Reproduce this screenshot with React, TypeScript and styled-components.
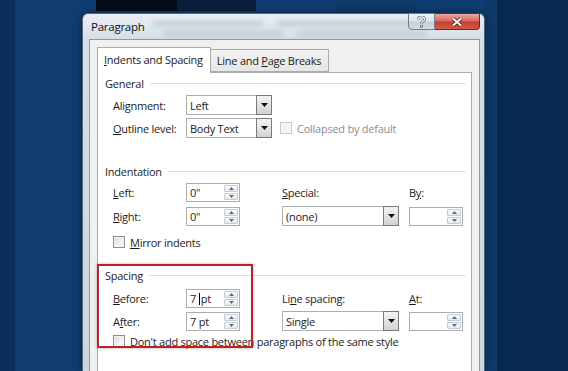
import * as React from 'react';
import styled, { createGlobalStyle } from 'styled-components';

const GlobalStyle = createGlobalStyle`
	html, body {
		margin: 0;
		padding: 0;
	}
	body {
		background: #0f3d72;
		font-family: 'Open Sans', 'Noto Sans', sans-serif;
		letter-spacing: -0.25px;
		-webkit-font-smoothing: antialiased;
	}
`;

const Desktop = styled.div`
	width: 568px;
	height: 371px;
	overflow: hidden;
	display: flex;
	flex-direction: column;
	background: linear-gradient(
		90deg,
		#0b2f5d 0,
		#0b2f5d 15px,
		#0f3d72 15px,
		#0f3d72 485px,
		#0e3a6b 485px,
		#0e3a6b 497px,
		#07294f 497px
	);
`;

const TileStrip = styled.div`
	display: flex;
	height: 13px;
	flex-shrink: 0;
`;

const Tile = styled.div<{ $w: number; $c: string }>`
	width: ${p => p.$w}px;
	height: 11px;
	background: ${p => p.$c};
`;

const Window = styled.div`
	margin-left: 82px;
	width: 403px;
	flex: 1;
	box-sizing: border-box;
	display: flex;
	flex-direction: column;
	border: 1px solid #56667a;
	border-bottom: none;
	border-radius: 6px 6px 0 0;
	background: linear-gradient(180deg, #e9eef3 0, #d6dfe8 24px, #cbd6e1 100%);
	box-shadow: 0 0 8px rgba(0, 0, 0, 0.45);
`;

const TitleBar = styled.div`
	position: relative;
	display: flex;
	align-items: flex-start;
	height: 25px;
	flex-shrink: 0;

	/* the blurred document behind the glass */
	&::before {
		content: '';
		position: absolute;
		left: 66px;
		top: 4px;
		width: 290px;
		height: 22px;
		background:
			linear-gradient(rgba(80, 95, 115, 0.2), rgba(80, 95, 115, 0.2)) 4px 3px / 110px 5px no-repeat,
			linear-gradient(rgba(80, 95, 115, 0.2), rgba(80, 95, 115, 0.2)) 128px 3px / 140px 5px no-repeat,
			linear-gradient(rgba(80, 95, 115, 0.16), rgba(80, 95, 115, 0.16)) 14px 13px / 120px 5px no-repeat,
			linear-gradient(rgba(80, 95, 115, 0.16), rgba(80, 95, 115, 0.16)) 148px 13px / 130px 5px no-repeat;
		filter: blur(2.5px);
	}
`;

const Title = styled.div`
	position: relative;
	flex: 1;
	padding-left: 8px;
	line-height: 25px;
	font-size: 11.5px;
	color: #111;
`;

const CaptionGroup = styled.div`
	position: relative;
	display: flex;
	margin-top: -1px;
	margin-right: 4px;
`;

const CaptionButton = styled.div<{ $close?: boolean }>`
	box-sizing: border-box;
	width: ${p => (p.$close ? 45 : 27)}px;
	height: 17px;
	display: flex;
	align-items: center;
	justify-content: center;
	border: 1px solid ${p => (p.$close ? '#6d2a24' : '#6f7e8e')};
	border-left: ${p => (p.$close ? 'none' : undefined)};
	border-radius: ${p => (p.$close ? '0 0 4px 0' : '0 0 0 4px')};
	background: ${p =>
		p.$close
			? 'linear-gradient(180deg, #eaa79d 0, #d8695c 45%, #c33f30 55%, #d25a48 100%)'
			: 'linear-gradient(180deg, #f1f4f7 0, #dbe2e9 45%, #c6d0da 55%, #d4dce4 100%)'};
`;

const Client = styled.div`
	flex: 1;
	display: flex;
	flex-direction: column;
	margin: 0 4px 0 6px;
	padding: 7px 7px 0 7px;
	border: 1px solid #8d99a7;
	border-bottom: none;
	background: #f0f0f0;
`;

const TabRow = styled.div`
	display: flex;
	align-items: flex-end;
	height: 26px;
	margin-bottom: -1px;
	position: relative;
	z-index: 1;
`;

const Tab = styled.div<{ $active?: boolean }>`
	box-sizing: border-box;
	height: ${p => (p.$active ? 26 : 23)}px;
	margin-bottom: ${p => (p.$active ? 0 : 1)}px;
	padding: ${p => (p.$active ? '0 7px 3px 6px' : '0 7px 1px 6px')};
	display: flex;
	align-items: center;
	border: 1px solid #acacac;
	border-bottom: ${p => (p.$active ? 'none' : '1px solid #acacac')};
	border-left: ${p => (p.$active ? '1px solid #acacac' : 'none')};
	background: ${p => (p.$active ? '#ffffff' : 'linear-gradient(180deg, #f3f3f3, #e6e6e6)')};
	font-size: 11px;
	color: #1b1b1b;
	white-space: nowrap;
`;

const Panel = styled.div`
	flex: 1;
	background: #ffffff;
	border: 1px solid #acacac;
	border-bottom: none;
	padding: 0 5px 0 7px;
`;

const GroupHeader = styled.div<{ $mt: number }>`
	display: flex;
	align-items: center;
	gap: 6px;
	height: 16px;
	margin-top: ${p => p.$mt}px;
	font-size: 11px;
	color: #1e1e1e;
`;

const Rule = styled.div`
	flex: 1;
	height: 1px;
	background: #dde1e6;
`;

const Section = styled.div`
	position: relative;
`;

const FieldRow = styled.div<{ $mt: number; $h?: number }>`
	display: grid;
	grid-template-columns: 73px 54px 42px 117px 10px 54px;
	align-items: center;
	height: ${p => p.$h ?? 20}px;
	margin-top: ${p => p.$mt}px;
	padding-left: 8px;
`;

const GeneralRow = styled.div<{ $mt: number }>`
	display: flex;
	align-items: center;
	height: 20px;
	margin-top: ${p => p.$mt}px;
	padding-left: 8px;
`;

const Label = styled.span<{ $w?: number; $disabled?: boolean }>`
	width: ${p => (p.$w ? `${p.$w}px` : 'auto')};
	font-size: 11px;
	color: ${p => (p.$disabled ? '#8e8e8e' : '#1b1b1b')};
	white-space: nowrap;
`;

const Combo = styled.div<{ $w: number }>`
	box-sizing: border-box;
	width: ${p => p.$w}px;
	height: 20px;
	display: flex;
	align-items: stretch;
	border: 1px solid #abadb3;
	background: #ffffff;
`;

const FieldText = styled.span`
	flex: 1;
	display: flex;
	align-items: center;
	padding-left: 3px;
	font-size: 11px;
	color: #1b1b1b;
	white-space: nowrap;
`;

const DropButton = styled.div`
	box-sizing: border-box;
	width: 16px;
	display: flex;
	align-items: center;
	justify-content: center;
	border: 1px solid #7a7a7a;
	margin: -1px -1px -1px 0;
	background: linear-gradient(180deg, #f2f2f2 0, #e3e3e3 50%, #d2d2d2 100%);
`;

const SpinBox = styled.div`
	box-sizing: border-box;
	width: 54px;
	height: 19px;
	display: flex;
	align-items: stretch;
	border: 1px solid #abadb3;
	background: #ffffff;
`;

const Spinner = styled.div`
	width: 14px;
	display: flex;
	flex-direction: column;
	gap: 1px;
	padding: 1px 1px 1px 0;
`;

const SpinHalf = styled.div`
	flex: 1;
	display: flex;
	align-items: center;
	justify-content: center;
	border: 1px solid #c5ccd5;
	border-radius: 1px;
	background: linear-gradient(180deg, #fafbfc, #e4e9ef);
`;

const Caret = styled.span`
	display: inline-block;
	width: 1px;
	height: 12px;
	margin-right: 1px;
	background: #000;
`;

const CheckRow = styled.div<{ $mt: number }>`
	display: flex;
	align-items: center;
	gap: 5px;
	height: 16px;
	margin-top: ${p => p.$mt}px;
	padding-left: 8px;
`;

const Check = styled.span<{ $disabled?: boolean }>`
	box-sizing: border-box;
	width: 12px;
	height: 12px;
	flex-shrink: 0;
	border: 1px solid ${p => (p.$disabled ? '#c9c9c9' : '#8e8f8f')};
	background: ${p =>
		p.$disabled ? '#f4f4f4' : 'linear-gradient(135deg, #d8d8d8 0, #f2f2f2 60%, #ffffff 100%)'};
	box-shadow: inset 0 0 0 1px ${p => (p.$disabled ? '#f7f7f7' : '#f4f4f4')};
`;

const Highlight = styled.div`
	position: absolute;
	left: -8px;
	top: -3px;
	width: 156px;
	height: 84px;
	box-sizing: border-box;
	border: 2px solid #b3242b;
	box-shadow: 0 0 3px rgba(90, 0, 0, 0.35);
	pointer-events: none;
`;

const ArrowDown = () => (
	<svg width="7" height="4" viewBox="0 0 7 4">
		<path d="M0 0h7L3.5 4z" fill="#111" />
	</svg>
);

const SpinArrow = ({ up }: { up?: boolean }) => (
	<svg width="5" height="3" viewBox="0 0 5 3">
		<path d={up ? 'M0 3h5L2.5 0z' : 'M0 0h5L2.5 3z'} fill="#5a6c80" />
	</svg>
);

const ComboBox = ({ width, value }: { width: number; value?: string }) => (
	<Combo $w={width}>
		<FieldText>{value}</FieldText>
		<DropButton>
			<ArrowDown />
		</DropButton>
	</Combo>
);

const Spin = ({ children }: { children?: React.ReactNode }) => (
	<SpinBox>
		<FieldText>{children}</FieldText>
		<Spinner>
			<SpinHalf>
				<SpinArrow up={true} />
			</SpinHalf>
			<SpinHalf>
				<SpinArrow />
			</SpinHalf>
		</Spinner>
	</SpinBox>
);

const Empty = () => <span />;

export default function App() {
	return (
		<React.Fragment>
			<GlobalStyle />
			<Desktop>
				<TileStrip>
					<Tile $w={96} $c="transparent" />
					<Tile $w={81} $c="#050c17" />
					<Tile $w={79} $c="#0a1e3b" />
					<Tile $w={80} $c="#0f3c70" />
					<Tile $w={80} $c="#0e3a6c" />
				</TileStrip>
				<Window>
					<TitleBar>
						<Title>Paragraph</Title>
						<CaptionGroup>
							<CaptionButton>
								<svg width="9" height="12" viewBox="0 0 9 12">
									<path
										d="M1.5 3.5C1.5 1.5 3 .8 4.5.8S7.5 1.7 7.5 3.4c0 2-3 2.3-3 4.3"
										fill="none"
										stroke="#4a5563"
										strokeWidth="2.6"
									/>
									<path
										d="M1.5 3.5C1.5 1.5 3 .8 4.5.8S7.5 1.7 7.5 3.4c0 2-3 2.3-3 4.3"
										fill="none"
										stroke="#fff"
										strokeWidth="1.2"
									/>
									<circle cx="4.5" cy="10.3" r="1.5" fill="#4a5563" />
									<circle cx="4.5" cy="10.3" r="0.8" fill="#fff" />
								</svg>
							</CaptionButton>
							<CaptionButton $close={true}>
								<svg width="12" height="10" viewBox="0 0 12 10">
									<path d="M2 1.5l8 7M10 1.5l-8 7" stroke="#4b1a16" strokeWidth="3.6" />
									<path d="M2 1.5l8 7M10 1.5l-8 7" stroke="#fff" strokeWidth="2" />
								</svg>
							</CaptionButton>
						</CaptionGroup>
					</TitleBar>
					<Client>
						<TabRow>
							<Tab $active={true}>
								<span>
									<u>I</u>ndents and Spacing
								</span>
							</Tab>
							<Tab>
								<span>
									Line and <u>P</u>age Breaks
								</span>
							</Tab>
						</TabRow>
						<Panel>
							<Section>
								<GroupHeader $mt={2}>
									General
									<Rule />
								</GroupHeader>
								<GeneralRow $mt={4}>
									<Label $w={73}>
										Ali<u>g</u>nment:
									</Label>
									<ComboBox width={86} value="Left" />
								</GeneralRow>
								<GeneralRow $mt={3}>
									<Label $w={73}>
										<u>O</u>utline level:
									</Label>
									<ComboBox width={86} value="Body Text" />
									<CheckRow $mt={0}>
										<Check $disabled={true} />
										<Label $disabled={true}>Collapsed by default</Label>
									</CheckRow>
								</GeneralRow>
							</Section>
							<Section>
								<GroupHeader $mt={25}>
									Indentation
									<Rule />
								</GroupHeader>
								<FieldRow $mt={4} $h={19}>
									<Label>
										<u>L</u>eft:
									</Label>
									<Spin>0"</Spin>
									<Empty />
									<Label>
										<u>S</u>pecial:
									</Label>
									<Empty />
									<Label>
										B<u>y</u>:
									</Label>
								</FieldRow>
								<FieldRow $mt={4}>
									<Label>
										<u>R</u>ight:
									</Label>
									<Spin>0"</Spin>
									<Empty />
									<ComboBox width={117} value="(none)" />
									<Empty />
									<Spin />
								</FieldRow>
								<CheckRow $mt={8}>
									<Check />
									<Label>
										<u>M</u>irror indents
									</Label>
								</CheckRow>
							</Section>
							<Section>
								<Highlight />
								<GroupHeader $mt={17}>
									Spacing
									<Rule />
								</GroupHeader>
								<FieldRow $mt={6} $h={19}>
									<Label>
										<u>B</u>efore:
									</Label>
									<Spin>
										7&nbsp;
										<Caret />
										pt
									</Spin>
									<Empty />
									<Label>
										Li<u>n</u>e spacing:
									</Label>
									<Empty />
									<Label>
										<u>A</u>t:
									</Label>
								</FieldRow>
								<FieldRow $mt={3}>
									<Label>
										A<u>f</u>ter:
									</Label>
									<Spin>7 pt</Spin>
									<Empty />
									<ComboBox width={117} value="Single" />
									<Empty />
									<Spin />
								</FieldRow>
								<CheckRow $mt={2}>
									<Check />
									<Label>
										Don't add spa<u>c</u>e between paragraphs of the same style
									</Label>
								</CheckRow>
							</Section>
						</Panel>
					</Client>
				</Window>
			</Desktop>
		</React.Fragment>
	);
}
